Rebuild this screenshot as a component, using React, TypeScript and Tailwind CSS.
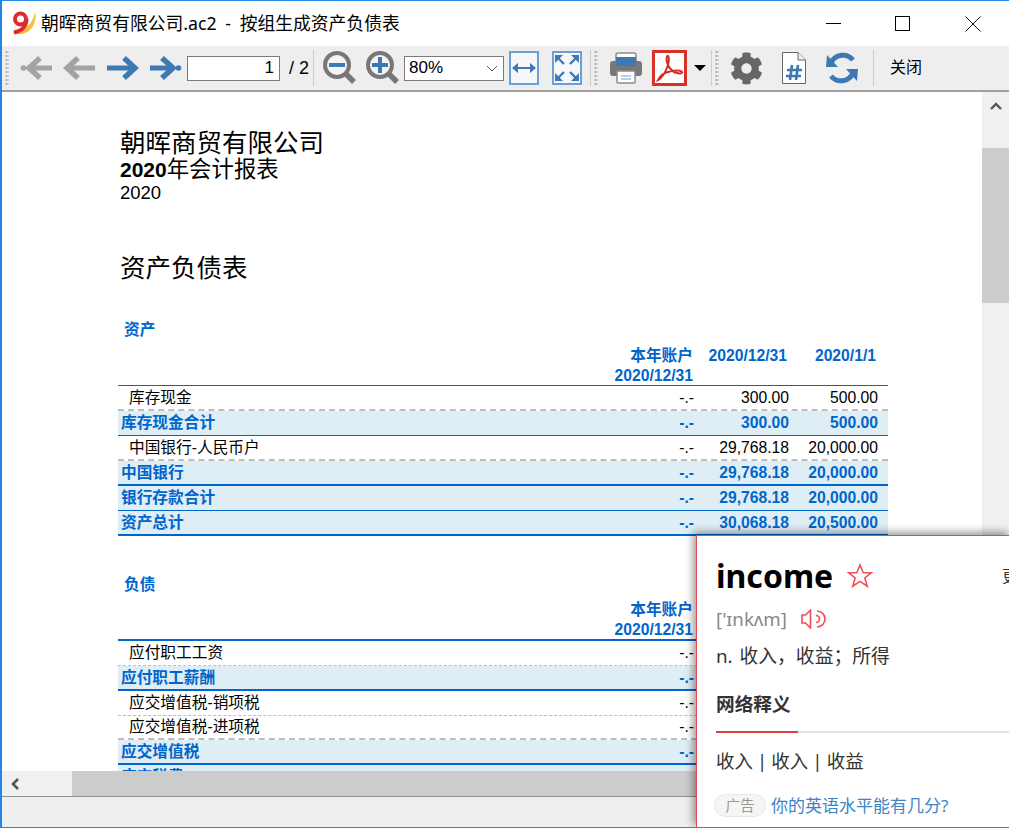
import { FaCog } from "react-icons/fa";

const BLUE = "#3d79b5";
const GRAY = "#a3a3a3";

function Logo() {
  return (
    <svg width="26" height="25" viewBox="0 0 26 25" className="ml-[10px] shrink-0">
      <path d="M1 21.5 C9 25 19 23 23 13 C25 8 25 4 24 1 C23 8 18 18 7 20 Z" fill="#f0c040" />
      <circle cx="9.5" cy="8" r="5.5" fill="none" stroke="#e02b2b" strokeWidth="4" />
      <path d="M15.5 8 C15.5 15 11 20 3 21.5" fill="none" stroke="#e02b2b" strokeWidth="4" />
    </svg>
  );
}

function Grip() {
  return (
    <div className="w-[4px] h-[36px] shrink-0 bg-[radial-gradient(circle,#a8a8a8_1px,transparent_1.2px)] bg-[length:3px_4px]" />
  );
}

function Sep() {
  return <div className="w-px h-[36px] bg-[#cccccc] shrink-0" />;
}

function Arrow({ dir, color, dot }: { dir: "left" | "right"; color: string; dot?: boolean }) {
  const flip = dir === "left" ? "-scale-x-100" : "";
  return (
    <svg width="32" height="26" viewBox="0 0 32 26" className={"shrink-0 " + flip}>
      <path d={dot ? "M0 13H22" : "M0 13H27"} stroke={color} strokeWidth="5" fill="none" />
      <path
        d={dot ? "M12 3L23 13L12 23" : "M17 3L28 13L17 23"}
        stroke={color}
        strokeWidth="5.5"
        fill="none"
      />
      {dot && <circle cx="28.5" cy="13" r="2.8" fill={color} />}
    </svg>
  );
}

function Zoom({ plus }: { plus?: boolean }) {
  return (
    <svg width="34" height="34" viewBox="0 0 34 34" className="shrink-0">
      <circle cx="14" cy="14" r="12" fill="#f4f4f4" stroke="#777777" strokeWidth="4" />
      <path d="M23 23L31 31" stroke="#777777" strokeWidth="5.5" />
      <path d="M6 14H22" stroke={BLUE} strokeWidth="4" />
      {plus && <path d="M14 6V22" stroke={BLUE} strokeWidth="4" />}
    </svg>
  );
}

function FitWidth() {
  return (
    <div className="w-[30px] h-[34px] shrink-0 border-2 border-[#6f9fd0] bg-[#f5f8fb] flex items-center justify-center">
      <svg width="24" height="12" viewBox="0 0 24 12">
        <path d="M1 6H23" stroke={BLUE} strokeWidth="2" />
        <path d="M0 6L6 1V11Z M24 6L18 1V11Z" fill={BLUE} />
      </svg>
    </div>
  );
}

function FitPage() {
  return (
    <div className="w-[30px] h-[34px] shrink-0 border-2 border-[#6f9fd0] bg-[#f5f8fb] flex items-center justify-center">
      <svg width="26" height="28" viewBox="0 0 26 28">
        <path d="M4 4L10 10 M22 4L16 10 M4 24L10 18 M22 24L16 18" stroke={BLUE} strokeWidth="2.4" />
        <path d="M1 1H9L1 9Z M25 1H17L25 9Z M1 27H9L1 19Z M25 27H17L25 19Z" fill={BLUE} />
      </svg>
    </div>
  );
}

function Printer() {
  return (
    <svg width="32" height="32" viewBox="0 0 32 32" className="shrink-0">
      <rect x="6" y="1" width="20" height="12" rx="2" fill="#fff" stroke="#8c8c8c" strokeWidth="1.5" />
      <rect x="0" y="9" width="32" height="15" rx="3" fill="#777777" />
      <rect x="6" y="5" width="20" height="9" fill={BLUE} />
      <rect x="7" y="19" width="18" height="12" rx="1" fill="#fff" stroke="#8c8c8c" strokeWidth="1.5" />
      <path d="M11 24H21 M11 27H21" stroke="#9cc0e0" strokeWidth="1.5" />
    </svg>
  );
}

function Pdf() {
  return (
    <div className="w-[35px] h-[36px] shrink-0 border-[3px] border-[#d9302a] bg-white flex items-center justify-center">
      <svg width="28" height="28" viewBox="0 0 28 28">
        <path
          d="M2 26C6 24 10 17 12 11C13 7 13 3 12 2C11 1 10 4 11 8C12 13 16 18 21 19C24 20 27 19 26 18C25 16 18 16 12 18C8 19 4 22 2 26Z"
          fill="none"
          stroke="#d62c26"
          strokeWidth="2"
        />
      </svg>
    </div>
  );
}

function FilePage() {
  return (
    <svg width="24" height="32" viewBox="0 0 24 32" className="shrink-0">
      <path d="M.5 .5H16L23.5 8V31.5H.5Z" fill="#fff" stroke="#666" />
      <path d="M16 .5V8H23.5" fill="#eee" stroke="#666" />
      <path d="M10 13L8 28 M16 13L14 28 M5 18H20 M4 24H19" stroke={BLUE} strokeWidth="2.6" />
    </svg>
  );
}

function Refresh() {
  return (
    <svg width="32" height="32" viewBox="0 0 32 32" className="shrink-0">
      <path d="M27 8A13 13 0 0 0 5 11" fill="none" stroke={BLUE} strokeWidth="5" />
      <path d="M5 24A13 13 0 0 0 27 21" fill="none" stroke={BLUE} strokeWidth="5" />
      <path d="M0 15H12L1 3Z M32 17H20L31 29Z" fill={BLUE} />
    </svg>
  );
}

function Toolbar() {
  return (
    <div className="h-[44px] bg-[#eeeeee] flex items-center shrink-0 text-[16px] text-black">
      <div className="ml-[3px]"><Grip /></div>
      <div className="ml-[11px]"><Arrow dir="left" color={GRAY} dot /></div>
      <div className="ml-[11px]"><Arrow dir="left" color={GRAY} /></div>
      <div className="ml-[12px]"><Arrow dir="right" color={BLUE} /></div>
      <div className="ml-[11px]"><Arrow dir="right" color={BLUE} dot /></div>
      <div className="ml-[5px] w-[93px] h-[25px] shrink-0 bg-white border border-[#7a7a7a] flex items-center justify-end pr-[5px] text-[17px]">
        1
      </div>
      <span className="ml-[9px] w-[24px] shrink-0 whitespace-nowrap text-[18px]">/ 2</span>
      <div><Sep /></div>
      <div className="ml-[9px]"><Zoom /></div>
      <div className="ml-[9px]"><Zoom plus /></div>
      <div className="ml-[4px] w-[100px] h-[25px] shrink-0 bg-white border border-[#7a7a7a] flex items-center justify-between pl-[4px] pr-[5px] text-[17px]">
        80%
        <svg width="12" height="7" viewBox="0 0 12 7">
          <path d="M1 1L6 6L11 1" fill="none" stroke="#555" />
        </svg>
      </div>
      <div className="ml-[5px]"><FitWidth /></div>
      <div className="ml-[13px]"><FitPage /></div>
      <div className="ml-[8px]"><Sep /></div>
      <div className="ml-[3px]"><Grip /></div>
      <div className="ml-[12px]"><Printer /></div>
      <div className="ml-[10px]"><Pdf /></div>
      <div className="ml-[7px] w-0 h-0 border-x-[6px] border-x-transparent border-t-[6px] border-t-black" />
      <div className="ml-[5px]"><Sep /></div>
      <div className="ml-[3px]"><Grip /></div>
      <div className="ml-[11px]"><FaCog size={33} color="#666666" /></div>
      <div className="ml-[19px]"><FilePage /></div>
      <div className="ml-[20px]"><Refresh /></div>
      <div className="ml-[15px]"><Sep /></div>
      <span className="ml-[16px] whitespace-nowrap">关闭</span>
    </div>
  );
}

type RowProps = {
  label: string;
  col1?: string;
  col2?: string;
  col3?: string;
  total?: boolean;
  short?: boolean;
  line: "dashed" | "dashedBold" | "thin" | "thick";
};

const lineClass = {
  dashed: "border-b border-dashed border-[#bdbdbd]",
  dashedBold: "border-b-2 border-dashed border-[#bdbdbd]",
  thin: "border-b border-[#0066cc]",
  thick: "border-b-2 border-[#0066cc]",
};

function Row({ label, col1 = "-.-", col2, col3, total, short, line }: RowProps) {
  const tone = total ? "bg-[#dfedf5] text-[#0066cc] font-bold" : "bg-white text-black";
  return (
    <div
      className={
        "flex items-center pr-[10px] leading-none shrink-0 " +
        (short ? "h-[24px] " : "h-[25px] ") +
        tone +
        " " +
        lineClass[line]
      }
    >
      <div className={"flex-1 whitespace-nowrap " + (total ? "pl-[3px]" : "pl-[11px]")}>{label}</div>
      <div className="w-[100px] text-right">{col1}</div>
      <div className="w-[95px] text-right">{col2}</div>
      <div className="w-[89px] text-right">{col3}</div>
    </div>
  );
}

function Head({
  title,
  second,
  third,
  mt,
  gap,
}: {
  title: string;
  second?: string;
  third?: string;
  mt: string;
  gap: string;
}) {
  return (
    <div className={"text-[#0066cc] font-bold leading-[20px] " + mt}>
      <div className="pl-[6px]">{title}</div>
      <div className={"flex pr-[10px] h-[39px] " + gap}>
        <div className="flex-1" />
        <div className="w-[100px] whitespace-nowrap flex flex-col items-end pr-[1px]">
          <span>本年账户</span>
          <span>2020/12/31</span>
        </div>
        <div className="w-[95px] text-right pr-[2px]">{second}</div>
        <div className="w-[89px] text-right pr-[2px]">{third}</div>
      </div>
    </div>
  );
}

function Document() {
  return (
    <div className="flex-1 min-w-0 h-full overflow-hidden bg-white pl-[116px] pt-[37px] text-[15.7px]">
      <div className="w-[770px]">
        <div className="pl-[2px] text-black">
          <div className="text-[25.5px] leading-[28px]">朝晖商贸有限公司</div>
          <div className="text-[21px] leading-[26px] font-bold">
            2020<span className="font-normal text-[22.4px]">年会计报表</span>
          </div>
          <div className="text-[18.5px] leading-[20px]">2020</div>
          <div className="mt-[49px] text-[25.5px] leading-[32px]">资产负债表</div>
        </div>

        <Head title="资产" second="2020/12/31" third="2020/1/1" mt="mt-[36px]" gap="mt-[6px]" />
        <div className="border-t border-[#0066cc]">
          <Row label="库存现金" col2="300.00" col3="500.00" line="dashedBold" />
          <Row label="库存现金合计" col2="300.00" col3="500.00" total line="thin" />
          <Row label="中国银行-人民币户" col2="29,768.18" col3="20,000.00" line="dashedBold" />
          <Row label="中国银行" col2="29,768.18" col3="20,000.00" total line="thick" />
          <Row label="银行存款合计" col2="29,768.18" col3="20,000.00" total line="thin" />
          <Row label="资产总计" col2="30,068.18" col3="20,500.00" total line="thick" />
        </div>

        <Head title="负债" mt="mt-[39px]" gap="mt-[5px]" />
        <div className="border-t-2 border-[#0066cc]">
          <Row label="应付职工工资" line="dashed" />
          <Row label="应付职工薪酬" total line="thick" />
          <Row label="应交增值税-销项税" line="dashed" />
          <Row label="应交增值税-进项税" short line="dashedBold" />
          <Row label="应交增值税" total line="thick" />
          <Row label="应交税费" total line="thin" />
        </div>
      </div>
    </div>
  );
}

function Popup() {
  return (
    <div className="absolute left-[694px] top-[534px] w-[315px] h-[293px] overflow-hidden bg-white border-l border-t border-[#e04a4a] shadow-[-3px_-3px_8px_rgba(0,0,0,0.4)] pl-[19px] pt-[18px] text-[#333333] [font-family:'Noto_Sans','Noto_Sans_CJK_SC',sans-serif]">
      <div className="flex items-center h-[44px]">
        <span className="text-[32px] font-bold text-black leading-none">income</span>
        <svg width="26" height="26" viewBox="0 0 24 24" className="ml-[14px]">
          <path
            d="M12 2L15 9H22.5L16.5 13.8L18.7 21.5L12 17L5.3 21.5L7.5 13.8L1.5 9H9Z"
            fill="none"
            stroke="#f0525a"
            strokeWidth="1.5"
          />
        </svg>
        <span className="ml-auto text-[16px] whitespace-nowrap w-[9px] overflow-hidden shrink-0">更多</span>
      </div>
      <div className="flex items-center mt-[8px] h-[26px]">
        <span className="text-[18.7px] text-[#888888]">['ɪnkʌm]</span>
        <svg width="26" height="20" viewBox="0 0 26 20" className="ml-[14px]">
          <path d="M9.5 1L4.5 6H1V14H4.5L9.5 19Z" fill="none" stroke="#f0525a" strokeWidth="1.7" />
          <path d="M15 6.5A3.5 3.5 0 0 1 15 13.5 M16 2A8 8 0 0 1 16 18" fill="none" stroke="#f0525a" strokeWidth="1.7" />
        </svg>
      </div>
      <div className="mt-[11px] text-[18.8px] leading-[26px] whitespace-nowrap [word-spacing:2px]">n. 收入，收益；所得</div>
      <div className="mt-[22px] text-[18.7px] font-bold leading-[26px]">网络释义</div>
      <div className="mt-[14px] h-[2px] bg-[#e5e5e5]">
        <div className="w-[82px] h-[2px] bg-[#e04040]" />
      </div>
      <div className="mt-[15px] text-[18.5px] leading-[26px] whitespace-nowrap [word-spacing:-0.75px]">收入 | 收入 | 收益</div>
      <div className="mt-[19px] flex items-center -ml-[2px] whitespace-nowrap">
        <span className="w-[52px] h-[23px] rounded-full border border-[#e6e6e6] bg-[#f5f5f5] text-[#999999] text-[14.5px] flex items-center justify-center">
          广告
        </span>
        <span className="ml-[5px] text-[17px] text-[#3d85c6]">你的英语水平能有几分?</span>
      </div>
    </div>
  );
}

export default function App() {
  return (
    <div className="relative w-[1009px] h-[828px] overflow-hidden bg-white border-t border-l-2 border-b border-[#1e88e5] flex flex-col [font-family:'Liberation_Sans','Noto_Sans_CJK_SC',sans-serif]">
      <div className="h-[45px] shrink-0 flex items-center text-[17.8px] text-black -ml-px">
        <Logo />
        <span className="ml-[4px] whitespace-nowrap [word-spacing:4px] [font-family:'Noto_Sans','Noto_Sans_CJK_SC',sans-serif]">
          朝晖商贸有限公司.ac2 - 按组生成资产负债表
        </span>
        <div className="ml-auto flex items-center pr-[28px]">
          <div className="w-[15px] h-px bg-black" />
          <div className="ml-[54px] w-[15px] h-[15px] border border-black" />
          <svg width="16" height="16" viewBox="0 0 16 16" className="ml-[55px]">
            <path d="M.5 .5L15.5 15.5M15.5 .5L.5 15.5" stroke="#111" />
          </svg>
        </div>
      </div>
      <Toolbar />
      <div className="h-[2px] bg-[#a0a0a0] shrink-0" />
      <div className="h-[679px] shrink-0 flex">
        <Document />
        <div className="w-[27px] h-full shrink-0 bg-[#f0f0f0]">
          <div className="h-[56px] flex justify-center pt-[10px]">
            <svg width="12" height="8" viewBox="0 0 12 8">
              <path d="M1 7L6 2L11 7" fill="none" stroke="#555" strokeWidth="2.4" />
            </svg>
          </div>
          <div className="h-[155px] bg-[#cdcdcd]" />
        </div>
      </div>
      <div className="h-[25px] shrink-0 flex bg-[#f0f0f0]">
        <div className="w-[70px] flex items-center pl-[8px]">
          <svg width="10" height="12" viewBox="0 0 10 12">
            <path d="M8 1L3 6L8 11" fill="none" stroke="#555" strokeWidth="2.6" />
          </svg>
        </div>
        <div className="flex-1 bg-[#cccccc]" />
      </div>
      <div className="h-[1px] bg-[#8a8f95] shrink-0" />
      <div className="flex-1 bg-[#efefef]" />
      <Popup />
    </div>
  );
}
